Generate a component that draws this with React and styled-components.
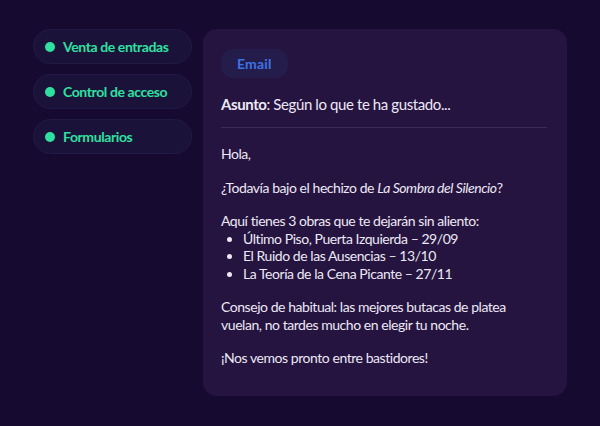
import React from 'react';
import styled, {createGlobalStyle} from 'styled-components';

const GlobalStyle = createGlobalStyle`
  html, body {
    margin: 0;
    padding: 0;
    background: #160a30;
  }
  body {
    font-family: Lato, "Noto Sans", sans-serif;
    color: #ece8f5;
  }
`;

const Page = styled.div`
  width: 600px;
  height: 426px;
  box-sizing: border-box;
  padding: 29px 33px 30px 33px;
  display: flex;
  gap: 11px;
  align-items: flex-start;
`;

const Sidebar = styled.nav`
  width: 159px;
  display: flex;
  flex-direction: column;
  gap: 10px;
`;

const Pill = styled.div`
  height: 35px;
  box-sizing: border-box;
  display: flex;
  align-items: center;
  gap: 8px;
  padding: 0 11px;
  border-radius: 18px;
  background: #1b1239;
  border: 1px solid #221a45;
  color: #2fe0a0;
  font-weight: 700;
  font-size: 14px;
  letter-spacing: -0.4px;
`;

const Dot = styled.span`
  width: 10px;
  height: 10px;
  border-radius: 50%;
  background: #2fe0a0;
  flex: none;
`;

const Card = styled.section`
  flex: 1;
  height: 367px;
  box-sizing: border-box;
  background: #25143f;
  border-radius: 14px;
  padding: 20px 20px 0 18px;
`;

const Badge = styled.span`
  display: inline-block;
  padding: 6px 16px;
  border-radius: 12px;
  background: #241c4b;
  color: #3c73e6;
  font-weight: 700;
  font-size: 14px;
  letter-spacing: 0.2px;
`;

const Subject = styled.div`
  margin-top: 17px;
  font-size: 15px;
  letter-spacing: -0.4px;
  padding-bottom: 14px;
  border-bottom: 1px solid #3a2a5a;
`;

const Body = styled.div`
  padding-top: 17px;
  font-size: 14px;
  letter-spacing: -0.45px;
  line-height: 17.5px;
  p {
    margin: 0 0 16px;
  }
`;

const List = styled.ul`
  margin: 0 0 16px;
  padding-left: 22px;
`;

export default function App() {
    return (
        <>
            <GlobalStyle />
            <Page>
                <Sidebar>
                    <Pill><Dot />Venta de entradas</Pill>
                    <Pill><Dot />Control de acceso</Pill>
                    <Pill><Dot />Formularios</Pill>
                </Sidebar>
                <Card>
                    <Badge>Email</Badge>
                    <Subject><b>Asunto</b>: Según lo que te ha gustado...</Subject>
                    <Body>
                        <p>Hola,</p>
                        <p>¿Todavía bajo el hechizo de <i>La Sombra del Silencio</i>?</p>
                        <p style={{marginBottom: 0}}>Aquí tienes 3 obras que te dejarán sin aliento:</p>
                        <List>
                            <li>Último Piso, Puerta Izquierda – 29/09</li>
                            <li>El Ruido de las Ausencias – 13/10</li>
                            <li>La Teoría de la Cena Picante – 27/11</li>
                        </List>
                        <p>Consejo de habitual: las mejores butacas de platea vuelan, no tardes mucho en elegir tu noche.</p>
                        <p>¡Nos vemos pronto entre bastidores!</p>
                    </Body>
                </Card>
            </Page>
        </>
    );
}
